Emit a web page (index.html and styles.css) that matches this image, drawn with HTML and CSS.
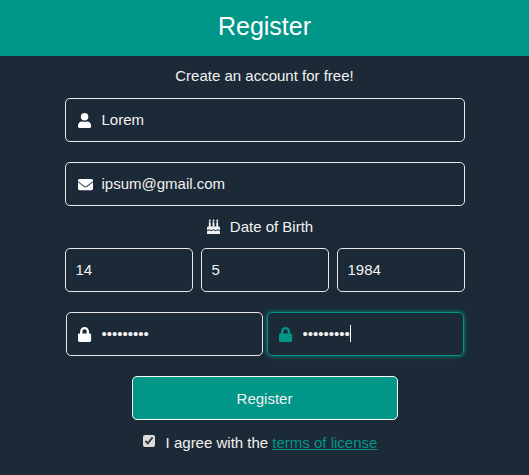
FILE: index.html
```html
<!DOCTYPE html>
<html lang="en">
<head>
    <meta charset="UTF-8">
    <meta name="viewport" content="width=device-width, initial-scale=1.0">
    <title>Register</title>
    <link rel="stylesheet" href="styles.css">
</head>
<body>
    <div class="register-header">
        <h1>Register</h1>
    </div>

    <form class="register-form">
        <p class="form-intro">Create an account for free!</p>

        <label class="field">
            <svg class="field-icon" viewBox="0 0 512 512" preserveAspectRatio="xMinYMid"><path fill="currentColor" d="M224 256a128 128 0 1 0 0-256 128 128 0 0 0 0 256zm90 32h-17a174 174 0 0 1-146 0h-17C60 288 0 348 0 422v42c0 27 21 48 48 48h352c27 0 48-21 48-48v-42c0-74-60-134-134-134z"/></svg>
            <input type="text" value="Lorem">
        </label>

        <label class="field">
            <svg class="field-icon" viewBox="0 0 512 512" preserveAspectRatio="xMinYMid"><path fill="currentColor" transform="translate(0 64)" d="M502 127c4-3 10 0 10 5v204c0 26-22 48-48 48H48c-26 0-48-22-48-48V132c0-5 6-8 10-5 22 17 52 39 154 113 21 15 57 48 92 48s72-33 92-48c102-74 132-96 152-113zM256 256c23 0 57-29 73-41 133-96 143-105 174-129 6-5 9-12 9-19V48c0-26-22-48-48-48H48C22 0 0 22 0 48v19c0 7 3 14 9 19 31 24 41 33 174 129 16 12 50 41 73 41z"/></svg>
            <input type="text" value="ipsum@gmail.com">
        </label>

        <div class="birth-label">
            <svg class="birth-icon" width="13" height="15" viewBox="0 0 448 512"><path fill="currentColor" d="M448 384c-28 0-31-32-74-32-43 0-47 32-75 32-27 0-31-32-75-32-43 0-47 32-75 32-28 0-31-32-74-32-44 0-47 32-75 32v-80c0-26 22-48 48-48h16V112h64v144h64V112h64v144h64V112h64v144h16c26 0 48 22 48 48v80zm0 128H0v-96c43 0 47-32 74-32 44 0 47 32 75 32 28 0 31-32 75-32 43 0 47 32 75 32 27 0 31-32 75-32 43 0 46 32 74 32v96zM96 96c-18 0-32-14-32-32 0-31 32-23 32-64 12 0 32 30 32 56s-14 40-32 40zm128 0c-18 0-32-14-32-32 0-31 32-23 32-64 12 0 32 30 32 56s-14 40-32 40zm128 0c-18 0-32-14-32-32 0-31 32-23 32-64 12 0 32 30 32 56s-14 40-32 40z"/></svg>
            <span>Date of Birth</span>
        </div>

        <div class="date-row">
            <input class="date-input" type="text" value="14">
            <input class="date-input" type="text" value="5">
            <input class="date-input" type="text" value="1984">
        </div>

        <div class="password-row">
            <label class="field password-field">
                <svg class="field-icon" viewBox="0 0 512 512" preserveAspectRatio="xMinYMid"><path fill="currentColor" d="M400 224h-24v-72C376 68 308 0 224 0S72 68 72 152v72H48c-26 0-48 22-48 48v192c0 26 22 48 48 48h352c26 0 48-22 48-48V272c0-26-22-48-48-48zm-104 0H152v-72c0-40 32-72 72-72s72 32 72 72v72z"/></svg>
                <input type="password" value="lorem1234">
            </label>
            <label class="field password-field">
                <svg class="field-icon" viewBox="0 0 512 512" preserveAspectRatio="xMinYMid"><path fill="currentColor" d="M400 224h-24v-72C376 68 308 0 224 0S72 68 72 152v72H48c-26 0-48 22-48 48v192c0 26 22 48 48 48h352c26 0 48-22 48-48V272c0-26-22-48-48-48zm-104 0H152v-72c0-40 32-72 72-72s72 32 72 72v72z"/></svg>
                <input type="password" value="lorem1234" autofocus>
                <span class="caret"></span>
            </label>
        </div>

        <button class="register-btn" type="button">Register</button>

        <label class="agree">
            <input type="checkbox" checked>
            <span>I agree with the <a href="#">terms of license</a></span>
        </label>
    </form>
</body>
</html>
```

FILE: styles.css
```css
* {
    margin: 0;
    padding: 0;
    box-sizing: border-box;
    font-family: 'Liberation Sans', Arial, sans-serif;
}

body {
    background: #1c2a37;
    color: #f2f2f2;
    font-size: 15px;
}

.register-header {
    background: #009688;
    height: 56px;
    padding-bottom: 3px;
    display: flex;
    justify-content: center;
    align-items: center;
}

.register-header h1 {
    color: white;
    font-size: 25px;
    font-weight: 400;
}

.register-form {
    width: 400px;
    margin: 0 auto;
    padding-top: 11px;
}

.form-intro {
    text-align: center;
    line-height: 18px;
    margin-bottom: 13px;
}

.field {
    position: relative;
    display: flex;
    align-items: center;
    height: 44px;
    border: 1px solid #e8e8e8;
    border-radius: 5px;
    margin-bottom: 20px;
    padding-left: 12px;
    color: white;
}

.field-icon {
    flex: none;
    width: 15px;
    height: 15px;
}

.field input {
    flex: 1;
    min-width: 0;
    height: 100%;
    margin-left: 9px;
    padding-bottom: 2px;
    background: none;
    border: none;
    outline: none;
    color: #f2f2f2;
    font-size: 15px;
    caret-color: white;
}

.field:focus-within {
    border-color: #009688;
    box-shadow: 0 0 4px #009688;
}

.field:focus-within .field-icon {
    color: #009688;
}

.caret {
    position: absolute;
    left: 82px;
    top: 12px;
    width: 1px;
    height: 17px;
    background: white;
}

.birth-label {
    display: flex;
    justify-content: center;
    align-items: center;
    gap: 10px;
    height: 18px;
    margin: -9px 0 13px;
    padding-right: 9px;
}

.date-row {
    display: grid;
    grid-template-columns: repeat(3, minmax(0, 1fr));
    gap: 8px;
    margin-bottom: 20px;
}

.date-input {
    width: 100%;
    height: 44px;
    padding: 0 0 2px 10px;
    background: none;
    border: 1px solid #e8e8e8;
    border-radius: 5px;
    outline: none;
    color: #f2f2f2;
    font-size: 15px;
}

.password-row {
    display: flex;
    justify-content: space-between;
    padding: 0 1px;
}

.password-field {
    width: 197px;
    padding-left: 11px;
}

.register-btn {
    display: block;
    width: 266px;
    height: 44px;
    margin: 0 auto 13px;
    background: #009688;
    border: 1px solid white;
    border-radius: 5px;
    color: #f2f2f2;
    font-size: 15px;
    cursor: pointer;
}

.agree {
    display: flex;
    justify-content: center;
    align-items: center;
    gap: 11px;
    height: 18px;
    padding-right: 9px;
}

.agree input {
    width: 12px;
    height: 12px;
    margin-top: -2px;
    accent-color: #dcdcdc;
}

.agree a {
    color: #009688;
}
```
